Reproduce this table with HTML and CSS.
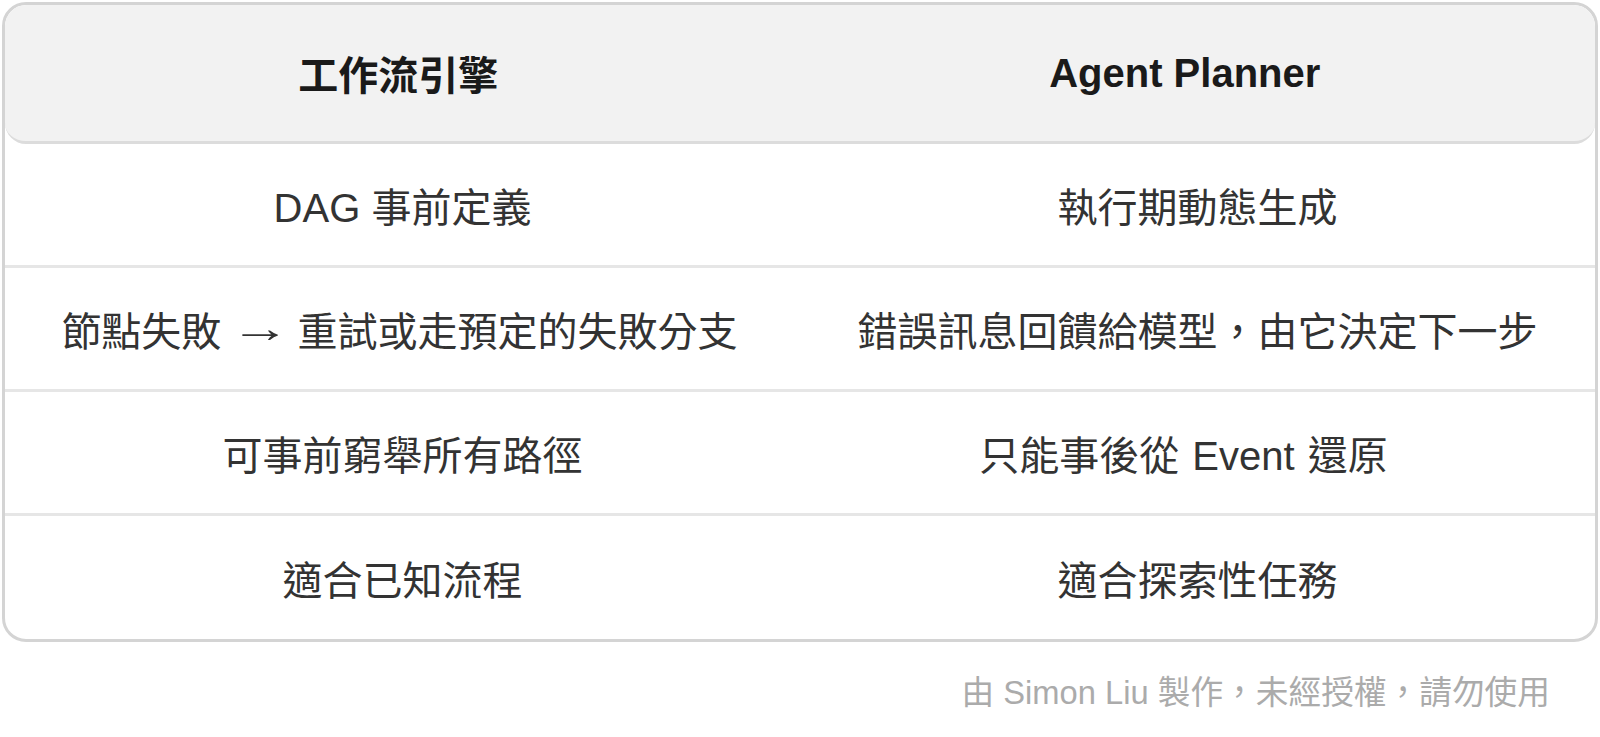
FILE: index.html
```html
<!DOCTYPE html>
<html lang="zh-Hant">
<head>
    <meta charset="UTF-8">
    <meta name="viewport" content="width=device-width, initial-scale=1.0">
    <title>工作流引擎 vs Agent Planner</title>
    <link rel="stylesheet" href="styles.css">
</head>
<body>
    <div class="page">
        <div class="compare-table">
            <div class="row head">
                <div class="cell">工作流引擎</div>
                <div class="cell">Agent Planner</div>
            </div>
            <div class="row">
                <div class="cell">DAG 事前定義</div>
                <div class="cell">執行期動態生成</div>
            </div>
            <div class="row">
                <div class="cell nudged">節點失敗 <span class="arrow">→</span> 重試或走預定的失敗分支</div>
                <div class="cell">錯誤訊息回饋給模型，由它決定下一步</div>
            </div>
            <div class="row">
                <div class="cell">可事前窮舉所有路徑</div>
                <div class="cell shifted">只能事後從 Event 還原</div>
            </div>
            <div class="row last">
                <div class="cell">適合已知流程</div>
                <div class="cell">適合探索性任務</div>
            </div>
        </div>
        <div class="credit">由 Simon Liu 製作，未經授權，請勿使用</div>
    </div>
</body>
</html>
```

FILE: styles.css
```css
body {
    font-family: "Liberation Sans", "Noto Sans CJK TC", sans-serif;
    background: #ffffff;
    margin: 0;
    padding: 0;
}
.page {
    padding: 2px 2px 0 2px;
}
.compare-table {
    border: 3px solid #d4d4d4;
    border-radius: 24px;
    overflow: hidden;
    background: white;
}
.row {
    display: grid;
    grid-template-columns: 1fr 1fr;
    height: 121px;
    border-bottom: 3px solid #e6e6e6;
}
.row.last {
    border-bottom: none;
    height: 123px;
}
.row.head {
    height: 136px;
    padding-right: 17px;
    background: #f2f2f2;
    border-bottom: 3px solid #dcdcdc;
    border-radius: 21px;
}
.cell {
    display: flex;
    align-items: center;
    justify-content: center;
    font-size: 40px;
    color: #333333;
    white-space: pre;
}
.cell.nudged {
    padding-right: 6px;
}
.cell.shifted {
    padding-right: 28px;
    word-spacing: 2px;
}
.arrow {
    display: inline-block;
    margin: 0 7px;
    transform: scaleX(1.5);
}
.head .cell {
    font-weight: bold;
    color: #1a1a1a;
}
.credit {
    text-align: right;
    color: #ababab;
    font-size: 32.7px;
    line-height: 40px;
    margin-top: 31px;
    padding-right: 48px;
}
```
